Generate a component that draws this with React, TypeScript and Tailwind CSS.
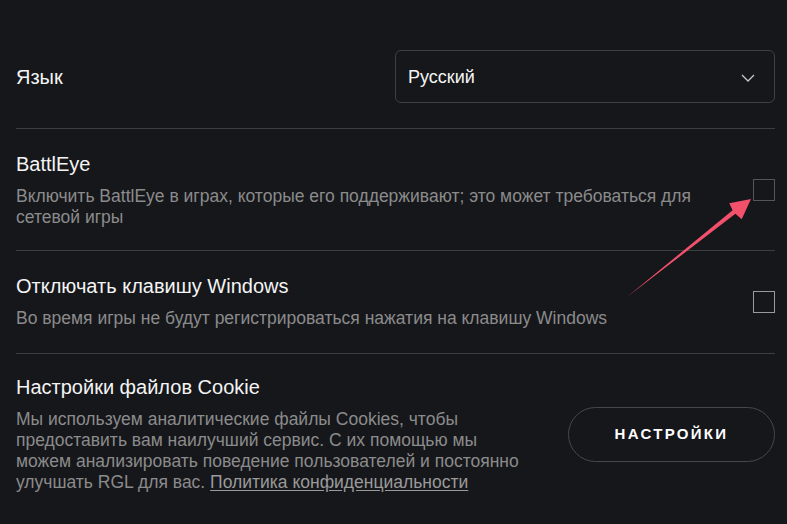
import React from "react";

const Checkbox = ({ border }: { border: string }) => (
  <div className={`w-[22px] h-[22px] shrink-0 border ${border}`} />
);

export default function App() {
  return (
    <div className="relative w-[787px] h-[524px] overflow-hidden bg-[#16171b] font-[family-name:'Liberation_Sans',Arial,sans-serif]">
      <div className="ml-4 w-[759px]">
        {/* Language */}
        <div className="flex items-center justify-between pt-[50px] pb-[25px] border-b border-[#3d3e42]">
          <span className="text-[20px] leading-[24px] text-[#f4f4f4]">Язык</span>
          <div className="w-[380px] h-[53px] rounded-[6px] border border-[#3f4044] flex items-center justify-between pl-3 pr-[19px]">
            <span className="text-[18px] leading-[22px] text-[#f4f4f4]">Русский</span>
            <svg width="14" height="8" viewBox="0 0 14 8" className="mt-[3px]">
              <path d="M1 1 L7 7 L13 1" fill="none" stroke="#c8c8c8" strokeWidth="1.3" />
            </svg>
          </div>
        </div>

        {/* BattlEye */}
        <div className="flex items-center justify-between pt-[23px] pb-[22px] border-b border-[#3d3e42]">
          <div className="flex-1">
            <div className="text-[20px] leading-[24px] text-[#f4f4f4]">BattlEye</div>
            <div className="mt-[10px] max-w-[700px] text-[17.5px] leading-[21px] text-[#8b8b8b]">
              Включить BattlEye в играх, которые его поддерживают; это может требоваться для сетевой игры
            </div>
          </div>
          <Checkbox border="border-[#55565a]" />
        </div>

        {/* Windows key */}
        <div className="flex items-center justify-between pt-[23px] pb-[24px] border-b border-[#3d3e42]">
          <div className="flex-1">
            <div className="text-[20px] leading-[24px] text-[#f4f4f4]">Отключать клавишу Windows</div>
            <div className="mt-[10px] text-[17.5px] leading-[21px] text-[#8b8b8b]">
              Во время игры не будут регистрироваться нажатия на клавишу Windows
            </div>
          </div>
          <Checkbox border="border-[#9a9a9a]" />
        </div>

        {/* Cookies */}
        <div className="flex items-center justify-between pt-[21px]">
          <div className="w-[506px]">
            <div className="text-[20px] leading-[24px] text-[#f4f4f4]">Настройки файлов Cookie</div>
            <div className="mt-[10px] text-[17.5px] leading-[21px] text-[#8b8b8b]">
              Мы используем аналитические файлы Cookies, чтобы предоставить вам наилучший сервис. С их помощью мы можем анализировать поведение пользователей и постоянно улучшать RGL для вас.{" "}
              <span className="underline underline-offset-[2px] text-[#9a9a9a]">Политика конфиденциальности</span>
            </div>
          </div>
          <button className="w-[207px] h-[55px] rounded-full border border-[#46474b] flex items-center justify-center text-[15px] font-bold tracking-[2.3px] text-white">
            НАСТРОЙКИ
          </button>
        </div>
      </div>

      {/* Annotation arrow */}
      <svg className="absolute left-0 top-0 pointer-events-none" width="787" height="524" viewBox="0 0 787 524">
        <polygon
          points="627,297 732.6,210.2 729.3,203.3 751,199 741.7,219.3 735.4,213.8"
          fill="#f2506b"
        />
      </svg>
    </div>
  );
}
